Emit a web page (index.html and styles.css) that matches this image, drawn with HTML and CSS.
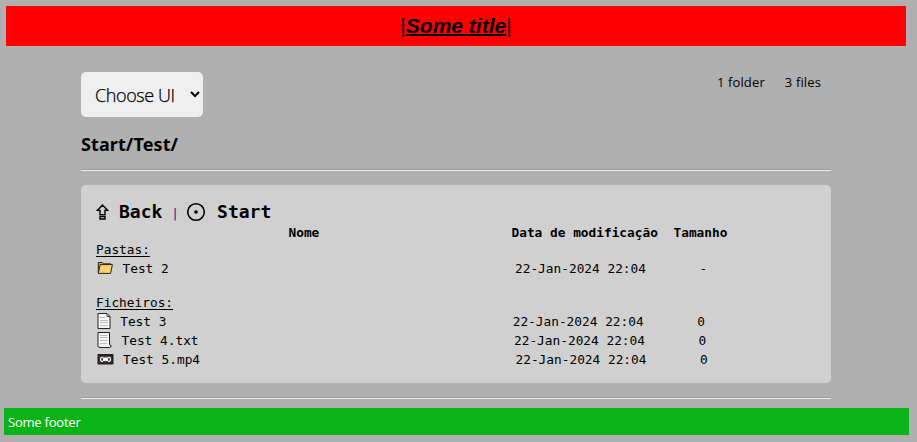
FILE: index.html
```html
<!DOCTYPE html>
<html lang="en">
<head>
<meta charset="utf-8">
<title>Some title</title>
<link rel="stylesheet" href="styles.css">
</head>
<body>
<header class="banner"><span class="bar">|</span><span class="title">Some title</span><span class="bar">|</span></header>
<main class="content">
  <div class="toolbar">
    <select class="chooser"><option>Choose UI</option></select>
    <div class="counts"><span class="folders">1 folder</span><span class="files">3 files</span></div>
  </div>
  <h1 class="path">Start/Test/</h1>
  <hr class="rule">
  <section class="panel">
    <nav class="nav">
      <svg class="up" width="13" height="16" viewBox="0 0 13 16"><path d="M6.5 1 1.3 6.4H4v4.2h5V6.4h2.7zM4 12.5h5V15H4z" fill="none" stroke="#000" stroke-width="1.4"/></svg>
      <b class="back">Back</b>
      <span class="sep">|</span>
      <svg class="home" width="20" height="20" viewBox="0 0 20 20"><circle cx="10" cy="10" r="8.3" fill="none" stroke="#000" stroke-width="1.6"/><circle cx="10" cy="10" r="1.8"/></svg>
      <b class="start">Start</b>
    </nav>
    <div class="head"><span class="h-name">Nome</span><span class="h-date">Data de modificação</span><span>Tamanho</span></div>
    <div class="group"><u>Pastas:</u></div>
    <div class="row">
      <span class="icon i-folder"><svg width="18" height="16" viewBox="0 0 18 16"><path d="M2.3 13V2.5h4l1.2 1.3h7.2V5" fill="#d9a73d" stroke="#222" stroke-width="1"/><path d="M2.3 13.4 4.2 4.6h12.2L14.6 13.4z" fill="#ffd06b" stroke="#222" stroke-width="1"/></svg></span>
      <span class="name">Test 2</span><span class="date">22-Jan-2024 22:04</span><span>-</span>
    </div>
    <div class="group second"><u>Ficheiros:</u></div>
    <div class="row">
      <span class="icon i-page"><svg width="18" height="18" viewBox="0 0 18 18"><path d="M2 1.5h9L14 4.5v12H2z" fill="#f5f5f5" stroke="#222"/><path d="M11 1.5v3h3" fill="none" stroke="#222" stroke-width=".8"/><path d="M4 5.5h5M4 8.5h8M4 10.5h8M4 13.5h8" stroke="#bbb"/></svg></span>
      <span class="name">Test 3</span><span class="date">22-Jan-2024 22:04</span><span>0</span>
    </div>
    <div class="row">
      <span class="icon i-text"><svg width="18" height="18" viewBox="0 0 18 18"><path d="M2 1.5h11.5V13q0 1.5 1.7 1.8 0 1.7-1.7 1.7H4q-2 0-2-2z" fill="#f5f5f5" stroke="#222"/><path d="M4 4.5h7.5M4 6.5h7.5M4 9.5h7.5M4 12.5h7" stroke="#bbb"/></svg></span>
      <span class="name">Test 4.txt</span><span class="date">22-Jan-2024 22:04</span><span>0</span>
    </div>
    <div class="row">
      <span class="icon i-video"><svg width="18" height="18" viewBox="0 0 18 18"><rect x="1.5" y="4" width="16" height="10.5" rx=".8" fill="#222"/><rect x="3.5" y="6" width="12" height="6.500" fill="#444"/><rect x="7" y="8" width="5" height="3" fill="#fff"/><path d="M7 7.500h5" stroke="#e87878"/><path d="M7 7.500q-2.500-.5-2.500 1.800T7 11.300M12 7.500q2.500-.5 2.500 1.800T12 11.300" fill="none" stroke="#eee" stroke-width="1.200"/></svg></span>
      <span class="name">Test 5.mp4</span><span class="date">22-Jan-2024 22:04</span><span>0</span>
    </div>
  </section>
  <hr class="rule last">
</main>
<footer class="footer">Some footer</footer>
</body>
</html>
```
FILE: styles.css
```css
* { box-sizing: border-box; }
html { overflow: hidden; }
body { margin: 0; padding: 6px 8px 0 4px; background: #b0b0b0; color: #000; font-family: "Open Sans", "Noto Sans", sans-serif; }
svg { display: block; flex: none; }
.banner { height: 40px; margin: 0 3px 0 2px; background: #f00; display: flex; justify-content: center; font: bold 21px/40px "Liberation Sans", Arial, sans-serif; }
.title { font-style: italic; text-decoration: underline; text-decoration-thickness: 2px; }
.bar { font-weight: normal; }
.content { width: 750px; margin-left: 77px; padding-top: 26px; }
.toolbar { display: flex; justify-content: space-between; height: 45px; }
.chooser { width: 122px; height: 45px; padding: 1px 0 0 10px; border: 0; border-radius: 5px; background: #efefef; color: #000; font: 300 18px "Open Sans", sans-serif; letter-spacing: -.4px; -webkit-text-stroke: .25px #000; }
.counts { display: flex; gap: 20px; padding: 1px 10px 0 0; font-size: 13px; line-height: 19px; letter-spacing: .13px; }
.path { margin: 15px 0 0; height: 24px; font: bold 18px/24px "Noto Sans", sans-serif; letter-spacing: .1px; white-space: nowrap; }
.rule { margin: 13px 0 0; height: 2px; border: 0; border-top: 1px solid #989898; border-bottom: 1px solid #eee; }
.panel { height: 198px; margin-top: 14px; padding: 15px; border-radius: 5px; background: #d0d0d0; font: 12.8px/17px "DejaVu Sans Mono", monospace; }
.panel span { white-space: pre; }
.nav { display: flex; align-items: center; height: 24px; }
.nav b { font-size: 18px; line-height: 24px; }
.back { margin-left: 10px; }
.sep { margin: 1px 7px 0 9px; color: #2a2a80; }
.start { margin-left: 11px; }
.head { display: flex; height: 17px; padding-left: 192.5px; font-weight: bold; }
.h-name { width: 223px; }
.h-date { width: 162px; }
.group { height: 17px; }
.group u { text-underline-offset: 2px; }
.second { margin-top: 17px; }
.row { display: flex; align-items: center; height: 19px; }
.icon { flex: none; }
.name, .date, .date + span { padding-top: 2px; }
.i-folder { width: 26.5px; }
.i-page { width: 24.2px; }
.i-text { width: 25.5px; }
.i-video { width: 27px; }
.name { width: 392.5px; }
.date { width: 184.5px; }
.last { margin-top: 14px; }
.footer { height: 27px; margin-top: 9px; padding: 1px 4px; background: #0ab418; color: #fff; font-size: 13px; line-height: 27px; letter-spacing: -.22px; }
```
